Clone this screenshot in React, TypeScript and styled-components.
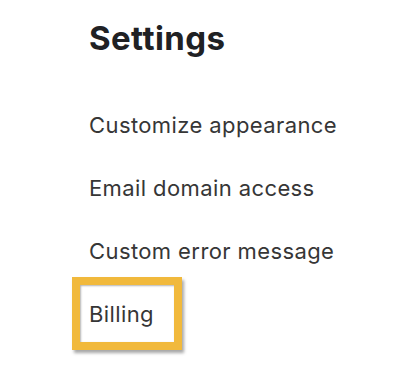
import styled, { createGlobalStyle } from 'styled-components'

const GlobalStyle = createGlobalStyle`
  html, body {
    margin: 0;
    padding: 0;
    background: #ffffff;
  }
  body {
    font-family: Inter, 'Noto Sans', sans-serif;
  }
`

const Page = styled.div`
  width: 400px;
  height: 379px;
  padding: 18px 0 0 89px;
  box-sizing: border-box;
  overflow: hidden;
`

const Title = styled.h1`
  margin: 0 0 36px;
  font-size: 33px;
  line-height: 40px;
  font-weight: 700;
  color: #202124;
  letter-spacing: 0.4px;
`

const Menu = styled.ul`
  list-style: none;
  margin: 0;
  padding: 0;
`

const Item = styled.li<{ $highlight?: boolean }>`
  position: relative;
  font-size: 22px;
  line-height: 63px;
  color: #363636;
  letter-spacing: 0.4px;
  white-space: nowrap;

  ${({ $highlight }) =>
    $highlight &&
    `
    &::before {
      content: '';
      position: absolute;
      left: -17px;
      top: -6px;
      width: 110px;
      height: 73px;
      box-sizing: border-box;
      border: 8px solid #f1b93c;
      box-shadow: 2px 3px 3px rgba(0, 0, 0, 0.35), inset 1px 1px 2px rgba(0, 0, 0, 0.3);
      pointer-events: none;
    }
  `}
`

const items = ['Customize appearance', 'Email domain access', 'Custom error message', 'Billing']

export default function App() {
  return (
    <>
      <GlobalStyle />
      <Page>
        <Title>Settings</Title>
        <Menu>
          {items.map((label) => (
            <Item key={label} $highlight={label === 'Billing'}>
              {label}
            </Item>
          ))}
        </Menu>
      </Page>
    </>
  )
}
